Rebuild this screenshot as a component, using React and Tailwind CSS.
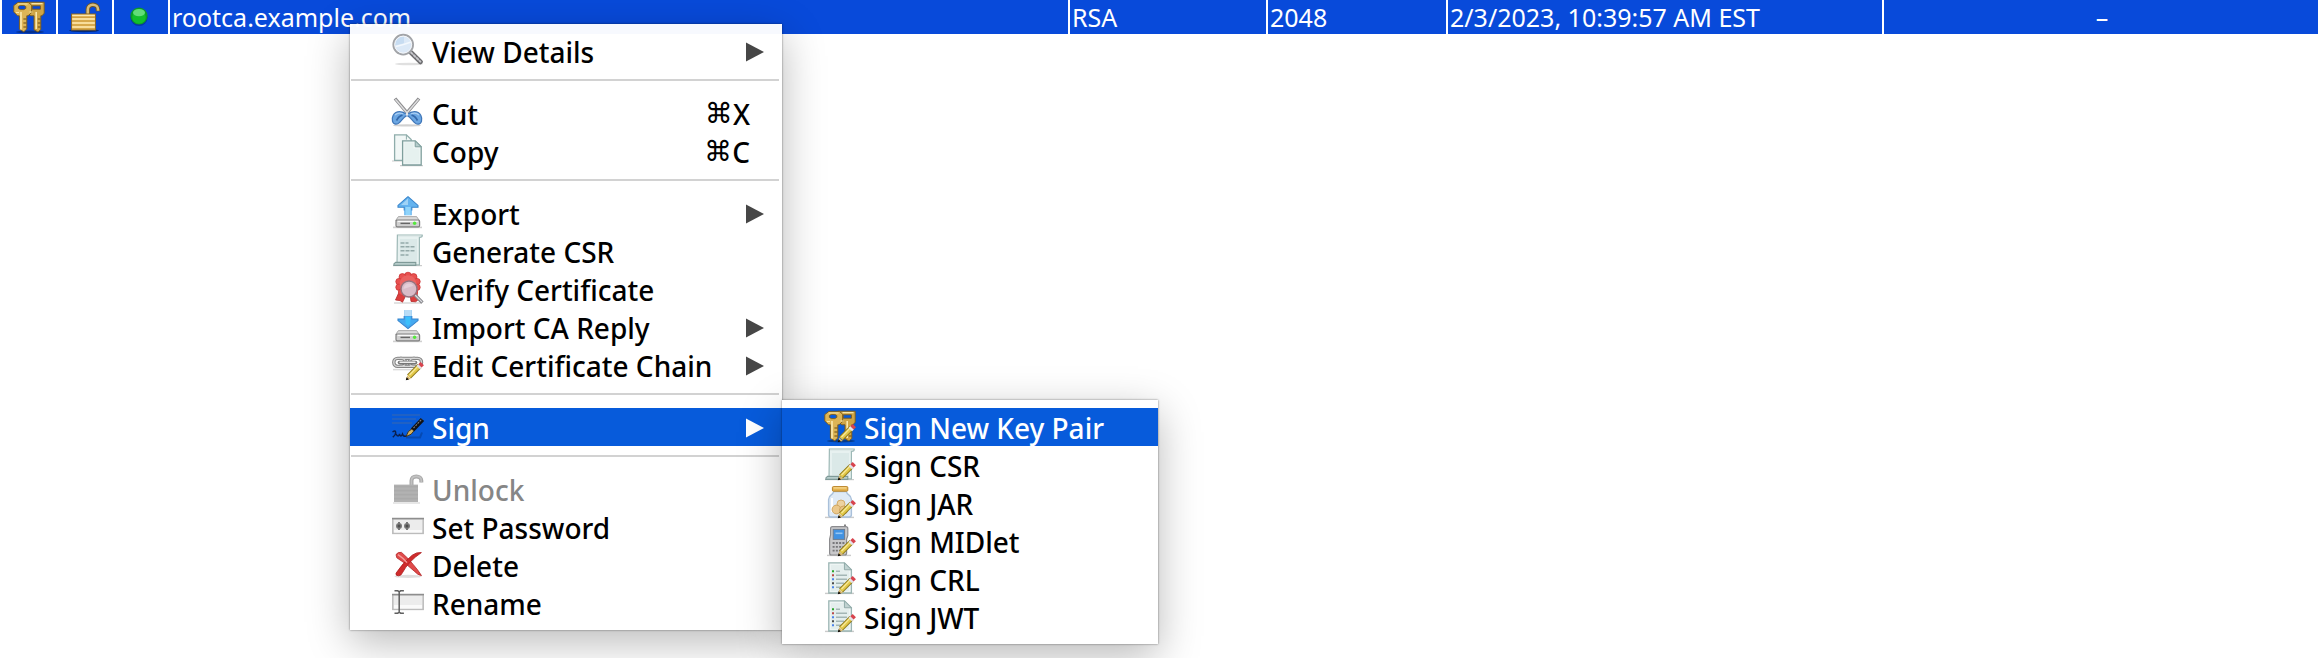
import React from "react";

function Svg({ children }) {
  return (
    <svg viewBox="0 0 32 32" className="size-8 shrink-0 overflow-visible" aria-hidden="true">
      {children}
    </svg>
  );
}

function Pencil() {
  return (
    <g>
      <path d="M17 28.5 27.5 18" stroke="#8f7a1c" strokeWidth="5.4" />
      <path d="M17 28.5 27 18.5" stroke="#e3c94a" strokeWidth="3.8" />
      <path d="M17.5 27 26 18.2" stroke="#f8eb9c" strokeWidth="1.2" />
      <path d="M26.3 19.6 28.2 17.6" stroke="#e4e4ea" strokeWidth="5" />
      <path d="M28 17.9 30.3 15.6" stroke="#d8444e" strokeWidth="4.6" />
      <path d="M14 32l1.2-4.4 3.6 3.4z" fill="#d9b56a" />
      <path d="M13.8 32.2l.8-3 2.4 2.2z" fill="#0c0a06" />
    </g>
  );
}

function KeyShapes() {
  return (
    <g>
      <ellipse cx="17" cy="31" rx="14" ry="1.4" fill="#000" opacity=".35" />
      <path
        fillRule="evenodd"
        d="M14 1.2h17.2v11l-2.2 2.600h-1.200v13.600l-2.800 2.600-4-2.200V14.800h-3.400L14 11zM19.200 4.800v3.400h8.200V4.800z"
        fill="#cfa546"
        stroke="#7c5a16"
        strokeWidth=".9"
      />
      <path
        fillRule="evenodd"
        d="M5 1.400h10.400l3.200 2.800v7.400l-3.600 3.200h-1.200v13.200l-3 2.800-4.400-2.600V14.800H4.600L.8 11V4.600zM5.400 5.600v1.800l2 1.200h3.400l2-1.200V5.600l-2-1.200H7.400z"
        fill="#dcb556"
        stroke="#7c5a16"
        strokeWidth=".9"
      />
      <path d="M8 11v17.500M23.200 11v17" stroke="#fae9ae" strokeWidth="1.600" />
      <path d="M13.400 18h-3M13.400 22h-3M13.400 26h-3M27.400 18h-2.600M27.400 22h-2.600M27.400 26h-2.600" stroke="#6b4d10" strokeWidth="1.200" />
      <path d="M4.600 3h10M18.500 2.700h11M3 11.500h3M16.500 11h3" stroke="#f8e5a4" strokeWidth="1.200" />
    </g>
  );
}

const KeysIcon = () => (
  <Svg>
    <KeyShapes />
  </Svg>
);

const LockIcon = () => (
  <Svg>
    <ellipse cx="15" cy="29.6" rx="15" ry="1.6" fill="#000" opacity=".45" />
    <path d="M18.8 13V8.6c0-3 2.2-4.8 5-4.8s5.2 1.8 5.2 4.6v1.8" fill="none" stroke="#6f5626" strokeWidth="4.4" />
    <path d="M18.8 13V8.6c0-3 2.2-4.8 5-4.8s5.2 1.8 5.2 4.6v1.4" fill="none" stroke="#d8bd7c" strokeWidth="2.6" />
    <rect x="2.6" y="13" width="23.8" height="16" fill="#efc363" stroke="#8a6420" strokeWidth="1" />
    <path d="M3.2 14.4h22.6M3.2 18h22.6M3.2 22h22.6M3.2 26h22.6" stroke="#fbe6ae" strokeWidth="1.4" />
    <path d="M3.2 16.2h22.6M3.2 20h22.6M3.2 24h22.6M3.2 28h22.6" stroke="#c08e35" strokeWidth="1" />
  </Svg>
);

const DotIcon = () => (
  <Svg>
    <circle cx="14" cy="16.5" r="8.6" fill="#04206c" opacity=".45" />
    <circle cx="14" cy="15" r="8.6" fill="#0c9a26" />
    <circle cx="14" cy="16" r="6.8" fill="#12bf2c" />
    <ellipse cx="14" cy="11.6" rx="6" ry="3.6" fill="#62dd78" />
  </Svg>
);

const SearchIcon = () => (
  <Svg>
    <ellipse cx="17" cy="30" rx="14" ry="1.3" fill="#000" opacity=".12" />
    <path d="M19 18.5 28.6 28" stroke="#6c6c6f" strokeWidth="4.6" strokeLinecap="round" />
    <path d="M19 18.5 28.4 27.6" stroke="#c6c6ca" strokeWidth="2" strokeLinecap="round" strokeDasharray="2 2" />
    <circle cx="11.2" cy="10.6" r="9.8" fill="#dce9f7" stroke="#a2a4a8" strokeWidth="2" />
    <path d="M3 11.6a8.3 8.3 0 0 1 9-9v6.6z" fill="#c7dcf1" />
    <path d="M4 12.5q7-1.5 15-4.5" stroke="#f3f8fd" strokeWidth="1.4" fill="none" />
    <circle cx="11.2" cy="10.6" r="8.5" fill="none" stroke="#f4f6f9" strokeWidth="1" />
  </Svg>
);

const CutIcon = () => (
  <Svg>
    <ellipse cx="15" cy="29.4" rx="14" ry="1.2" fill="#000" opacity=".18" />
    <path d="M3 2.5 17 19M27 2.5 13 19" stroke="#8c8c8e" strokeWidth="3.4" />
    <path d="M3.4 3.2 16 18M26.6 3.2 14 18" stroke="#dededf" strokeWidth="1.4" />
    <path
      d="M14.6 18.4C11 15 4 14.2 1.2 19.2c-2 4-.8 8.8 2.6 9 4.4.2 6.2-6.4 10.8-8.6z"
      fill="#6ba6e2"
      stroke="#3f76b8"
      strokeWidth="1.2"
    />
    <path
      d="M15.4 18.4C19 15 26 14.2 28.8 19.2c2 4 .8 8.8-2.6 9-4.4.2-6.2-6.4-10.8-8.6z"
      fill="#6ba6e2"
      stroke="#3f76b8"
      strokeWidth="1.2"
    />
    <path d="M4.500 24.500q2.500-4.500 6-5.300M25.500 24.500q-2.500-4.500-6-5.300" stroke="#3468aa" strokeWidth="1.700" fill="none" />
    <path d="M3 19q3-3 8-1.200M27 19q-3-3-8-1.200" stroke="#a9cdf2" strokeWidth="1.200" fill="none" />
    <circle cx="15" cy="18.4" r="1.3" fill="#e8e8ec" />
  </Svg>
);

const CopyIcon = () => (
  <Svg>
    <path d="M0 27h12M8 31.6h23" stroke="#000" strokeWidth="1.2" opacity=".2" />
    <path d="M2.6.8h11.8l4.8 4.8v20.8H2.6z" fill="#f1f7f6" stroke="#8fadab" strokeWidth="1.3" />
    <path d="M10.6 6.8h12.6l6 6v18.2H10.6z" fill="#f1f7f6" stroke="#7f9f9d" strokeWidth="1.3" />
    <path d="M12.4 8.6h9v6h6v14.8h-15z" fill="#dfeceb" opacity=".6" />
    <path d="M23.2 6.8v6h6z" fill="#b5cccb" stroke="#7f9f9d" />
    <path d="M14.4.8v4.8" stroke="#8fadab" />
  </Svg>
);

function Drive() {
  return (
    <g>
      <path d="M1 31.4h29" stroke="#000" strokeWidth="1.6" opacity=".18" />
      <path d="M6.4 20.6h18.200l2.800 4H3.600z" fill="#dadada" stroke="#9a9a9a" strokeWidth=".8" />
      <rect x="4" y="24" width="23.6" height="6.8" rx="1.4" fill="#d0d0d0" stroke="#7f7f7f" strokeWidth="1.2" />
      <path d="M5.6 25.4h20.4" stroke="#f8f8f8" strokeWidth="1.2" />
      <path d="M8.5 27.4h9.5" stroke="#666" strokeWidth="1.4" />
      <circle cx="22.6" cy="27.2" r="1.7" fill="#54e83c" />
    </g>
  );
}

const ExportIcon = () => (
  <Svg>
    <Drive />
    <path d="M16 .6 26 9.4v1.8h-6.2v8H12.200v-8H6V9.400z" fill="#64b3ef" />
    <path d="M16 .6 26 9.400v1.800h-6.200v3.200M12.200 14.400v-3.200H6V9.400L16 .6" fill="none" stroke="#3a86cc" strokeWidth="1.1" />
    <path d="M13.4 11v8h5.2v-8z" fill="#8fd4fb" />
    <path d="M16 2.6 9 9h7z" fill="#a0d3f6" />
  </Svg>
);

const ImportIcon = () => (
  <Svg>
    <Drive />
    <path d="M12.2 0h7.6v9H26v1.6L16 18.6 6 10.6V9h6.2z" fill="#45a9f0" />
    <path d="M12.2 0h7.6v6h-7.6z" fill="#b9dcf6" />
    <path d="M12.2 6v3H6v1.6l10 8 10-8V9h-6.2V6" fill="none" stroke="#3583cd" strokeWidth="1.1" />
    <path d="M13.6 7h4.8v6.5L16 16l-2.4-2.5z" fill="#3cc0fc" />
  </Svg>
);

function Scroll() {
  return (
    <g>
      <path d="M1 31.6h29" stroke="#000" strokeWidth="1.2" opacity=".2" />
      <path d="M5.4 1h24.8q.6 2.200-2.800 2.400v27.400H5z" fill="#e7f1f0" stroke="#9db8b6" strokeWidth="1.2" />
      <path d="M8 5h17v22H8z" fill="#d5e5e4" opacity=".7" />
      <path d="M6 1.4h23" stroke="#cbdad9" strokeWidth="1.8" />
      <path d="M3.4 28.4h20.4v3H1.8q-.4-2 1.6-3z" fill="#b7cdcb" stroke="#7f9a98" strokeWidth="1.1" />
    </g>
  );
}

const ScrollIcon = () => (
  <Svg>
    <Scroll />
    <path d="M8.5 9h8M8.5 12.8h15M8.5 16.8h15M8.5 21h8" stroke="#94aaa9" strokeWidth="1.5" strokeDasharray="4 1" />
  </Svg>
);

const ScrollSignIcon = () => (
  <Svg>
    <Scroll />
    <Pencil />
  </Svg>
);

const VerifyIcon = () => (
  <Svg>
    <path d="M2 31h28" stroke="#000" strokeWidth="1.2" opacity=".18" />
    <path d="M8 18 3.500 28l4.500.6 2.500 1.600L14 23zM18 22l1 7.400 4.500.4 2-1.400L25 18z" fill="#dc3d3d" stroke="#b32a2a" strokeWidth=".8" />
    <g fill="#e8504f" stroke="#cb3737" strokeWidth=".8">
      <circle cx="16" cy="3.6" r="3.4" />
      <circle cx="10.4" cy="5" r="3.4" />
      <circle cx="21.6" cy="5" r="3.4" />
      <circle cx="7" cy="9.6" r="3.2" />
      <circle cx="25" cy="9.6" r="3.2" />
      <circle cx="7" cy="15.2" r="3.2" />
      <circle cx="25" cy="15.2" r="3.2" />
      <circle cx="9.6" cy="20" r="3.2" />
      <circle cx="22.4" cy="20" r="3.2" />
    </g>
    <circle cx="16" cy="11.6" r="8.4" fill="#ea6361" />
    <path d="m23 23 7.4 7.6" stroke="#858589" strokeWidth="3.4" />
    <path d="m23 23 7 7" stroke="#d9d9de" strokeWidth="1.2" />
    <circle cx="17" cy="17" r="8" fill="#d9bcc8" stroke="#94727e" strokeWidth="1.4" />
    <path d="M11.5 17a5.500 5.500 0 0 1 10-3.200z" fill="#e5cfd9" />
  </Svg>
);

const ChainIcon = () => (
  <Svg>
    <path d="M1 21.6h24" stroke="#000" strokeWidth="1.5" opacity=".14" />
    <g fill="none" stroke="#858585" strokeWidth="3.4">
      <rect x="1.8" y="10.4" width="11.5" height="8" rx="3.8" />
      <rect x="17.5" y="10.4" width="12" height="8" rx="3.8" />
      <path d="M8 10.400h15M8 18.400h15" />
    </g>
    <g fill="none" stroke="#d6d6d6" strokeWidth="1.4">
      <rect x="1.8" y="10.4" width="11.5" height="8" rx="3.8" />
      <rect x="17.5" y="10.4" width="12" height="8" rx="3.8" />
      <path d="M8 10.400h15M8 18.400h15" />
    </g>
    <path d="M7.5 14.6h16" stroke="#777" strokeWidth="3.6" strokeLinecap="round" />
    <path d="M8 14.2h15" stroke="#ececec" strokeWidth="1.4" strokeLinecap="round" />
    <Pencil />
  </Svg>
);

const SignIcon = () => (
  <Svg>
    <path d="M0 5h28M0 9h24M0 13h20" stroke="#2a64bd" strokeWidth="1.7" />
    <path d="M14 27.5h14l2-5" stroke="#06429f" strokeWidth="2" fill="none" opacity=".7" />
    <path d="M.5 22q3-2 3.2.4T.8 27.2M4 23.8q2.5 4.5 3.5 0 1 4.5 3 .2 1 3 3.5 2" stroke="#0b1f4c" strokeWidth="1.5" fill="none" />
    <path d="M20.5 20 30.5 9.5" stroke="#101114" strokeWidth="4.6" />
    <path d="M21.5 18 30 9" stroke="#77797c" strokeWidth="1.2" strokeDasharray="2 1" />
    <path d="m14 26.5 2.4-5 3.4-2.5 2 2-2.6 3.2z" fill="#d2b162" stroke="#3b2d10" strokeWidth=".9" />
  </Svg>
);

const UnlockIcon = () => (
  <Svg>
    <path d="M1 31h27" stroke="#000" strokeWidth="1.5" opacity=".12" />
    <path d="M19.5 13V8.8c0-2.8 2-4.4 4.8-4.4s5 1.6 5 4.2v2" fill="none" stroke="#a9a9a9" strokeWidth="4" />
    <path d="M19.5 13V8.8c0-2.8 2-4.4 4.8-4.4s5 1.6 5 4.2v1.6" fill="none" stroke="#c2c2c2" strokeWidth="1.6" />
    <rect x="2" y="12.6" width="24" height="17.4" fill="#b2b2b2" />
    <path d="M2 14.6h24M2 18.6h24M2 22.6h24M2 26.6h24" stroke="#aaaaaa" strokeWidth="1.6" />
  </Svg>
);

const PasswordIcon = () => (
  <Svg>
    <rect x=".8" y="8.6" width="30.4" height="14.8" fill="#ececec" stroke="#bcbcbc" strokeWidth="1.5" />
    <path d="M0 8.6h32" stroke="#8e8e8e" strokeWidth="1.5" />
    <path d="M2 20h28v2.5H2z" fill="#fafafa" />
    <path d="M7 12v8M15 12v8" stroke="#777" strokeWidth="2" />
    <ellipse cx="7" cy="16" rx="3" ry="2.900" fill="#777" />
    <ellipse cx="15" cy="16" rx="3" ry="2.900" fill="#777" />
    <circle cx="7" cy="16" r="1.500" fill="#4c4c4c" />
    <circle cx="15" cy="16" r="1.500" fill="#4c4c4c" />
  </Svg>
);

const DeleteIcon = () => (
  <Svg>
    <ellipse cx="16" cy="28.4" rx="13.5" ry="1.6" fill="#000" opacity=".13" />
    <path d="M4 6.600q2-3 5.500-2.200 7 6 11.600 12 5 5.600 8.400 11.200-3.600-.4-7.400-4.600Q15 16 4.800 9.800z" fill="#e04a4a" stroke="#b32426" strokeWidth=".8" />
    <path d="M29.4 4.6q-4.600-.8-9.200 2.600Q10.500 15 4 25.200q-.6 2.600 2.600 2.600 2.600 0 3.800-3 6-11.400 19-20.200z" fill="#cf2c2c" stroke="#ad1d20" strokeWidth=".8" />
    <path d="M6 6.600q6 4 9 8" stroke="#f49a98" strokeWidth="1.4" fill="none" />
  </Svg>
);

const RenameIcon = () => (
  <Svg>
    <rect x=".8" y="8.6" width="30.4" height="14.8" fill="#ececec" stroke="#bcbcbc" strokeWidth="1.5" />
    <path d="M0 8.6h32" stroke="#8e8e8e" strokeWidth="1.5" />
    <path d="M2 19h28v3.5H2z" fill="#fafafa" />
    <path d="M7.2 5.5v21M2.5 4.8h3.3l1.4 1 1.4-1h3.3M2.5 27.2h3.3l1.4-1 1.4 1h3.3" fill="none" stroke="#5f5f5f" strokeWidth="1.5" />
  </Svg>
);

const KeysSignIcon = () => (
  <Svg>
    <KeyShapes />
    <Pencil />
  </Svg>
);

const JarIcon = () => (
  <Svg>
    <path d="M1 31.4h29" stroke="#000" strokeWidth="1.4" opacity=".2" />
    <path d="M9.6 5.6h12.8q.4 2 2.4 3.2 2.6 1.6 2.6 4.6v15q0 2.600-2.400 2.600H7q-2.400 0-2.400-2.600v-15q0-3 2.600-4.600 2-1.200 2.400-3.200z" fill="#dfeaf6" stroke="#a9c0da" strokeWidth="1.4" />
    <path d="M8 12v14" stroke="#fff" strokeWidth="2" />
    <circle cx="17" cy="18" r="4" fill="#edd2a0" stroke="#d3ac6a" />
    <circle cx="12.5" cy="23.5" r="4.4" fill="#ebc88c" stroke="#cfa45e" />
    <circle cx="19.5" cy="24" r="4" fill="#e9c588" stroke="#cfa45e" />
    <rect x="8.4" y=".6" width="15.4" height="4.6" rx="1" fill="#e5b350" stroke="#b98328" />
    <path d="M9.5 1.9h13" stroke="#f9dc95" strokeWidth="1.2" />
    <Pencil />
  </Svg>
);

const PhoneIcon = () => (
  <Svg>
    <path d="M3 31.4h24" stroke="#000" strokeWidth="1.4" opacity=".2" />
    <path d="M21 .4v3" stroke="#777" strokeWidth="1.8" />
    <path d="M8.4 2.6h13.4q2 0 2 2v7L22.600 15v14q0 2-2 2H7.400q-1.800 0-1.800-2V15L6.600 11V4.600q0-2 1.800-2z" fill="#c8c8ca" stroke="#8b8b8e" strokeWidth="1.2" />
    <rect x="9.2" y="5.4" width="11.4" height="10" fill="#4192e2" stroke="#6f7d8e" />
    <path d="M11.5 8.5h7v1.600h-7z" fill="#97c6f3" />
    <path d="M8.6 19h11.8M8.6 22.8h11.8M8.6 26.6h11.8" stroke="#77777a" strokeWidth="1.8" strokeDasharray="2 1.27" />
    <Pencil />
  </Svg>
);

const ListIcon = () => (
  <Svg>
    <path d="M1 31.4h29" stroke="#000" strokeWidth="1.4" opacity=".2" />
    <path d="M4.8.8h15.6l7 7v23.200H4.800z" fill="#eef5f4" stroke="#9bb5b3" strokeWidth="1.3" />
    <path d="M7 3h12.500v6H25v20H7z" fill="#dfebea" opacity=".7" />
    <path d="M20.400.8v7h7z" fill="#c0d2d1" stroke="#8fa9a7" />
    <path d="M12 9.200h4M12 13.200h11M12 17.200h11M12 21.200h8M12 25.200h6" stroke="#a3b6b5" strokeWidth="1.5" />
    <path d="M8 8.200h2v2H8z" fill="#2aa52a" />
    <path d="M8 12.200h2v2H8z" fill="#b94a4a" />
    <path d="M8 16.200h2v2H8z" fill="#4c82ea" />
    <path d="M8 20.200h2v2H8z" fill="#4a4a4a" />
    <path d="M8 24.200h2v2H8z" fill="#4c82ea" />
    <Pencil />
  </Svg>
);

function Arrow() {
  return (
    <svg viewBox="0 0 18 20" className="h-5 w-[18px] fill-current" aria-hidden="true">
      <path d="M0 .5 18 10 0 19.500z" />
    </svg>
  );
}

function Item({ icon, label, shortcut, arrow, active, disabled }) {
  const tone = active
    ? "bg-[#075bdb] text-white"
    : disabled
      ? "text-[#868686]"
      : "text-black";
  return (
    <button
      type="button"
      role="menuitem"
      disabled={disabled}
      aria-haspopup={arrow ? "menu" : undefined}
      className={`flex h-[38px] w-full items-center gap-2 pr-[18px] pl-[42px] text-left text-[28px] font-medium leading-8 whitespace-nowrap ${tone}`}
    >
      <span className="mb-[2px]">{icon}</span>
      <span className="grow pt-[2px]">{label}</span>
      {shortcut && (
        <span className="flex items-center pt-[2px] pr-[14px]">
          <span className="font-['DejaVu_Sans',sans-serif]">⌘</span>
          {shortcut}
        </span>
      )}
      {arrow && (
        <span className={active ? "pt-[2px] text-white" : "pt-[2px] text-[#464646]"}>
          <Arrow />
        </span>
      )}
    </button>
  );
}

const Separator = () => (
  <div role="separator" className="mt-[9px] mr-[3px] mb-[13px] ml-px h-[2px] bg-[#d2d2d2]" />
);

const panel =
  "absolute py-2 shadow-[0_0_2px_rgba(0,0,0,0.5),0_12px_40px_rgba(0,0,0,0.28)]";

function SignMenu() {
  return (
    <div role="menu" aria-label="Sign" className={`${panel} -top-2 left-full w-[376px] bg-white`}>
      <Item icon={<KeysSignIcon />} label="Sign New Key Pair" active />
      <Item icon={<ScrollSignIcon />} label="Sign CSR" />
      <Item icon={<JarIcon />} label="Sign JAR" />
      <Item icon={<PhoneIcon />} label="Sign MIDlet" />
      <Item icon={<ListIcon />} label="Sign CRL" />
      <Item icon={<ListIcon />} label="Sign JWT" />
    </div>
  );
}

function ContextMenu() {
  return (
    <div role="menu" aria-label="Key pair" className={`${panel} top-6 left-[350px] w-[432px] bg-white/97`}>
      <Item icon={<SearchIcon />} label="View Details" arrow />
      <Separator />
      <Item icon={<CutIcon />} label="Cut" shortcut="X" />
      <Item icon={<CopyIcon />} label="Copy" shortcut="C" />
      <Separator />
      <Item icon={<ExportIcon />} label="Export" arrow />
      <Item icon={<ScrollIcon />} label="Generate CSR" />
      <Item icon={<VerifyIcon />} label="Verify Certificate" />
      <Item icon={<ImportIcon />} label="Import CA Reply" arrow />
      <Item icon={<ChainIcon />} label="Edit Certificate Chain" arrow />
      <Separator />
      <div className="relative">
        <Item icon={<SignIcon />} label="Sign" arrow active />
        <SignMenu />
      </div>
      <Separator />
      <Item icon={<UnlockIcon />} label="Unlock" disabled />
      <Item icon={<PasswordIcon />} label="Set Password" />
      <Item icon={<DeleteIcon />} label="Delete" />
      <Item icon={<RenameIcon />} label="Rename" />
    </div>
  );
}

const cell = "h-[34px] overflow-hidden border-l-2 border-white p-0 pl-[2px] whitespace-nowrap";
const iconCell = "h-[34px] border-l-2 border-white p-0";

export default function App() {
  return (
    <main className="relative min-h-screen overflow-hidden bg-white font-['Noto_Sans','DejaVu_Sans',sans-serif]">
      <div className="pr-[6px]">
        <table className="w-full table-fixed border-separate border-spacing-0 bg-[#084ada] text-[25px] leading-8 text-white">
          <colgroup>
            <col className="w-14" />
            <col className="w-14" />
            <col className="w-14" />
            <col className="w-[900px]" />
            <col className="w-[198px]" />
            <col className="w-[180px]" />
            <col className="w-[436px]" />
            <col />
          </colgroup>
          <tbody>
            <tr>
              <td className={iconCell}>
                <div className="flex justify-center"><KeysIcon /></div>
              </td>
              <td className={iconCell}>
                <div className="flex justify-center"><LockIcon /></div>
              </td>
              <td className={iconCell}>
                <div className="flex justify-center"><DotIcon /></div>
              </td>
              <td className={cell}>rootca.example.com</td>
              <td className={cell}>RSA</td>
              <td className={cell}>2048</td>
              <td className={cell}>2/3/2023, 10:39:57 AM EST</td>
              <td className={`${cell} text-center`}>–</td>
            </tr>
          </tbody>
        </table>
      </div>
      <ContextMenu />
    </main>
  );
}
